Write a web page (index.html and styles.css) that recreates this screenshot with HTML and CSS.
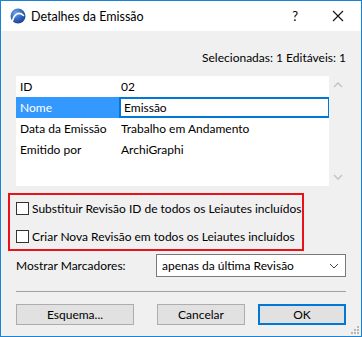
FILE: index.html
```html
<!DOCTYPE html>
<html lang="pt">
<head>
    <meta charset="UTF-8">
    <title>Detalhes da Emissão</title>
    <link rel="stylesheet" href="styles.css">
</head>
<body>
    <div class="window">
        <!-- title bar -->
        <div class="titlebar">
            <svg class="app-icon" width="16" height="16" viewBox="0 0 16 16">
                <defs>
                    <radialGradient id="ball" cx="0.35" cy="0.3" r="0.8">
                        <stop offset="0" stop-color="#6fa3e8"/>
                        <stop offset="0.6" stop-color="#2b5fb8"/>
                        <stop offset="1" stop-color="#173f86"/>
                    </radialGradient>
                </defs>
                <circle cx="8" cy="8" r="7.5" fill="url(#ball)"/>
                <path d="M2.5 13 C4 6 9 3 13.5 7.5" stroke="#fff" stroke-width="1.6" fill="none" stroke-linecap="round"/>
            </svg>
            <span class="title">Detalhes da Emissão</span>
            <span class="help">?</span>
            <svg class="close" width="12" height="12" viewBox="0 0 12 12">
                <path d="M1 1 L11 11 M11 1 L1 11" stroke="#111" stroke-width="1.1"/>
            </svg>
        </div>

        <div class="content">
            <div class="counts">Selecionadas: 1 Editáveis: 1</div>

            <div class="table-wrap">
                <div class="table">
                    <div class="row"><span class="key">ID</span><span class="val">02</span></div>
                    <div class="row selected"><span class="key">Nome</span><span class="val edit">Emissão</span></div>
                    <div class="row"><span class="key">Data da Emissão</span><span class="val">Trabalho em Andamento</span></div>
                    <div class="row"><span class="key">Emitido por</span><span class="val">ArchiGraphi</span></div>
                </div>
                <div class="scroll">
                    <svg width="10" height="6" viewBox="0 0 10 6"><path d="M1 5 L5 1 L9 5" stroke="#c4c4c4" stroke-width="1.5" fill="none"/></svg>
                    <svg width="10" height="6" viewBox="0 0 10 6"><path d="M1 1 L5 5 L9 1" stroke="#c4c4c4" stroke-width="1.5" fill="none"/></svg>
                </div>
            </div>

            <div class="options">
                <label class="check"><span class="box"></span>Substituir Revisão ID de todos os Leiautes incluídos</label>
                <label class="check"><span class="box"></span>Criar Nova Revisão em todos os Leiautes incluídos</label>
            </div>

            <div class="marker-row">
                <span class="marker-label">Mostrar Marcadores:</span>
                <div class="select">
                    <span>apenas da última Revisão</span>
                    <svg width="10" height="6" viewBox="0 0 10 6"><path d="M1 1 L5 5 L9 1" stroke="#444" stroke-width="1" fill="none"/></svg>
                </div>
            </div>

            <div class="separator"></div>

            <div class="buttons">
                <button class="btn wide">Esquema...</button>
                <div class="right-buttons">
                    <button class="btn">Cancelar</button>
                    <button class="btn default">OK</button>
                </div>
            </div>
        </div>

        <svg class="grip" width="10" height="10" viewBox="0 0 10 10">
            <rect x="8" y="2" width="2" height="2" fill="#b8b8b8"/>
            <rect x="5" y="5" width="2" height="2" fill="#b8b8b8"/>
            <rect x="8" y="5" width="2" height="2" fill="#b8b8b8"/>
            <rect x="2" y="8" width="2" height="2" fill="#b8b8b8"/>
            <rect x="5" y="8" width="2" height="2" fill="#b8b8b8"/>
            <rect x="8" y="8" width="2" height="2" fill="#b8b8b8"/>
        </svg>
    </div>
</body>
</html>
```

FILE: styles.css
```css
body {
    margin: 0;
    font-family: Lato, "Noto Sans", sans-serif;
    font-size: 12px;
    color: #000;
    background: #fff;
}
.window {
    position: relative;
    width: 362px;
    height: 337px;
    box-sizing: border-box;
    border: 1px solid #1883d7;
    background: #f0f0f0;
}
.titlebar {
    height: 30px;
    background: #fff;
    display: flex;
    align-items: center;
}
.app-icon {
    margin-left: 9px;
    margin-right: 5px;
}
.title {
    flex: 1;
    font-size: 12.5px;
}
.help {
    font-size: 13px;
    margin-right: 34px;
}
.close {
    margin-right: 17px;
}
.content {
    padding: 19px 15px 0 15px;
}
.counts {
    text-align: right;
    line-height: 16px;
    height: 16px;
}
.table-wrap {
    display: flex;
    margin-top: 10px;
}
.table {
    width: 314px;
    height: 110px;
    background: #fff;
}
.row {
    display: flex;
    height: 21px;
    align-items: center;
}
.key {
    width: 99px;
    padding-left: 4px;
}
.val {
    padding-left: 2px;
}
.row.selected {
    background: linear-gradient(to right, #3399ff 0, #3399ff 103px, #fff 103px);
}
.row.selected .key {
    color: #fff;
}
.val.edit {
    flex: 1;
    height: 21px;
    box-sizing: border-box;
    border: 2px solid #0078d7;
    border-right-width: 1px;
    padding-left: 3px;
    display: flex;
    align-items: center;
}
.scroll {
    width: 16px;
    display: flex;
    flex-direction: column;
    justify-content: space-between;
    align-items: center;
    padding: 6px 0 6px 0;
    margin-left: 1px;
    height: 110px;
    box-sizing: border-box;
}
.options {
    margin: 7px 0 0 -8px;
    width: 296px;
    height: 58px;
    box-sizing: border-box;
    border: 2px solid #e8121b;
    padding: 7px 0 0 6px;
    display: flex;
    flex-direction: column;
    gap: 15px;
}
.check {
    display: flex;
    align-items: center;
    height: 13px;
    white-space: nowrap;
}
.box {
    width: 13px;
    height: 13px;
    box-sizing: border-box;
    border: 1px solid #333;
    background: #fff;
    margin-right: 3px;
}
.marker-row {
    display: flex;
    align-items: center;
    margin-top: 3px;
    height: 23px;
}
.marker-label {
    width: 140px;
}
.select {
    flex: 1;
    height: 23px;
    box-sizing: border-box;
    border: 1px solid #7a7a7a;
    background: #fff;
    display: flex;
    align-items: center;
    justify-content: space-between;
    padding: 0 6px 0 5px;
}
.separator {
    margin-top: 14px;
    border-top: 1px solid #a0a0a0;
}
.buttons {
    display: flex;
    justify-content: space-between;
    margin-top: 12px;
}
.right-buttons {
    display: flex;
    gap: 13px;
}
.btn {
    font-family: inherit;
    font-size: 12px;
    height: 21px;
    width: 88px;
    padding: 0;
    background: #e1e1e1;
    border: 1px solid #adadad;
    color: #000;
}
.btn.wide {
    width: 118px;
}
.btn.default {
    border: 2px solid #0078d7;
}
.grip {
    position: absolute;
    right: 2px;
    bottom: 2px;
}
```
